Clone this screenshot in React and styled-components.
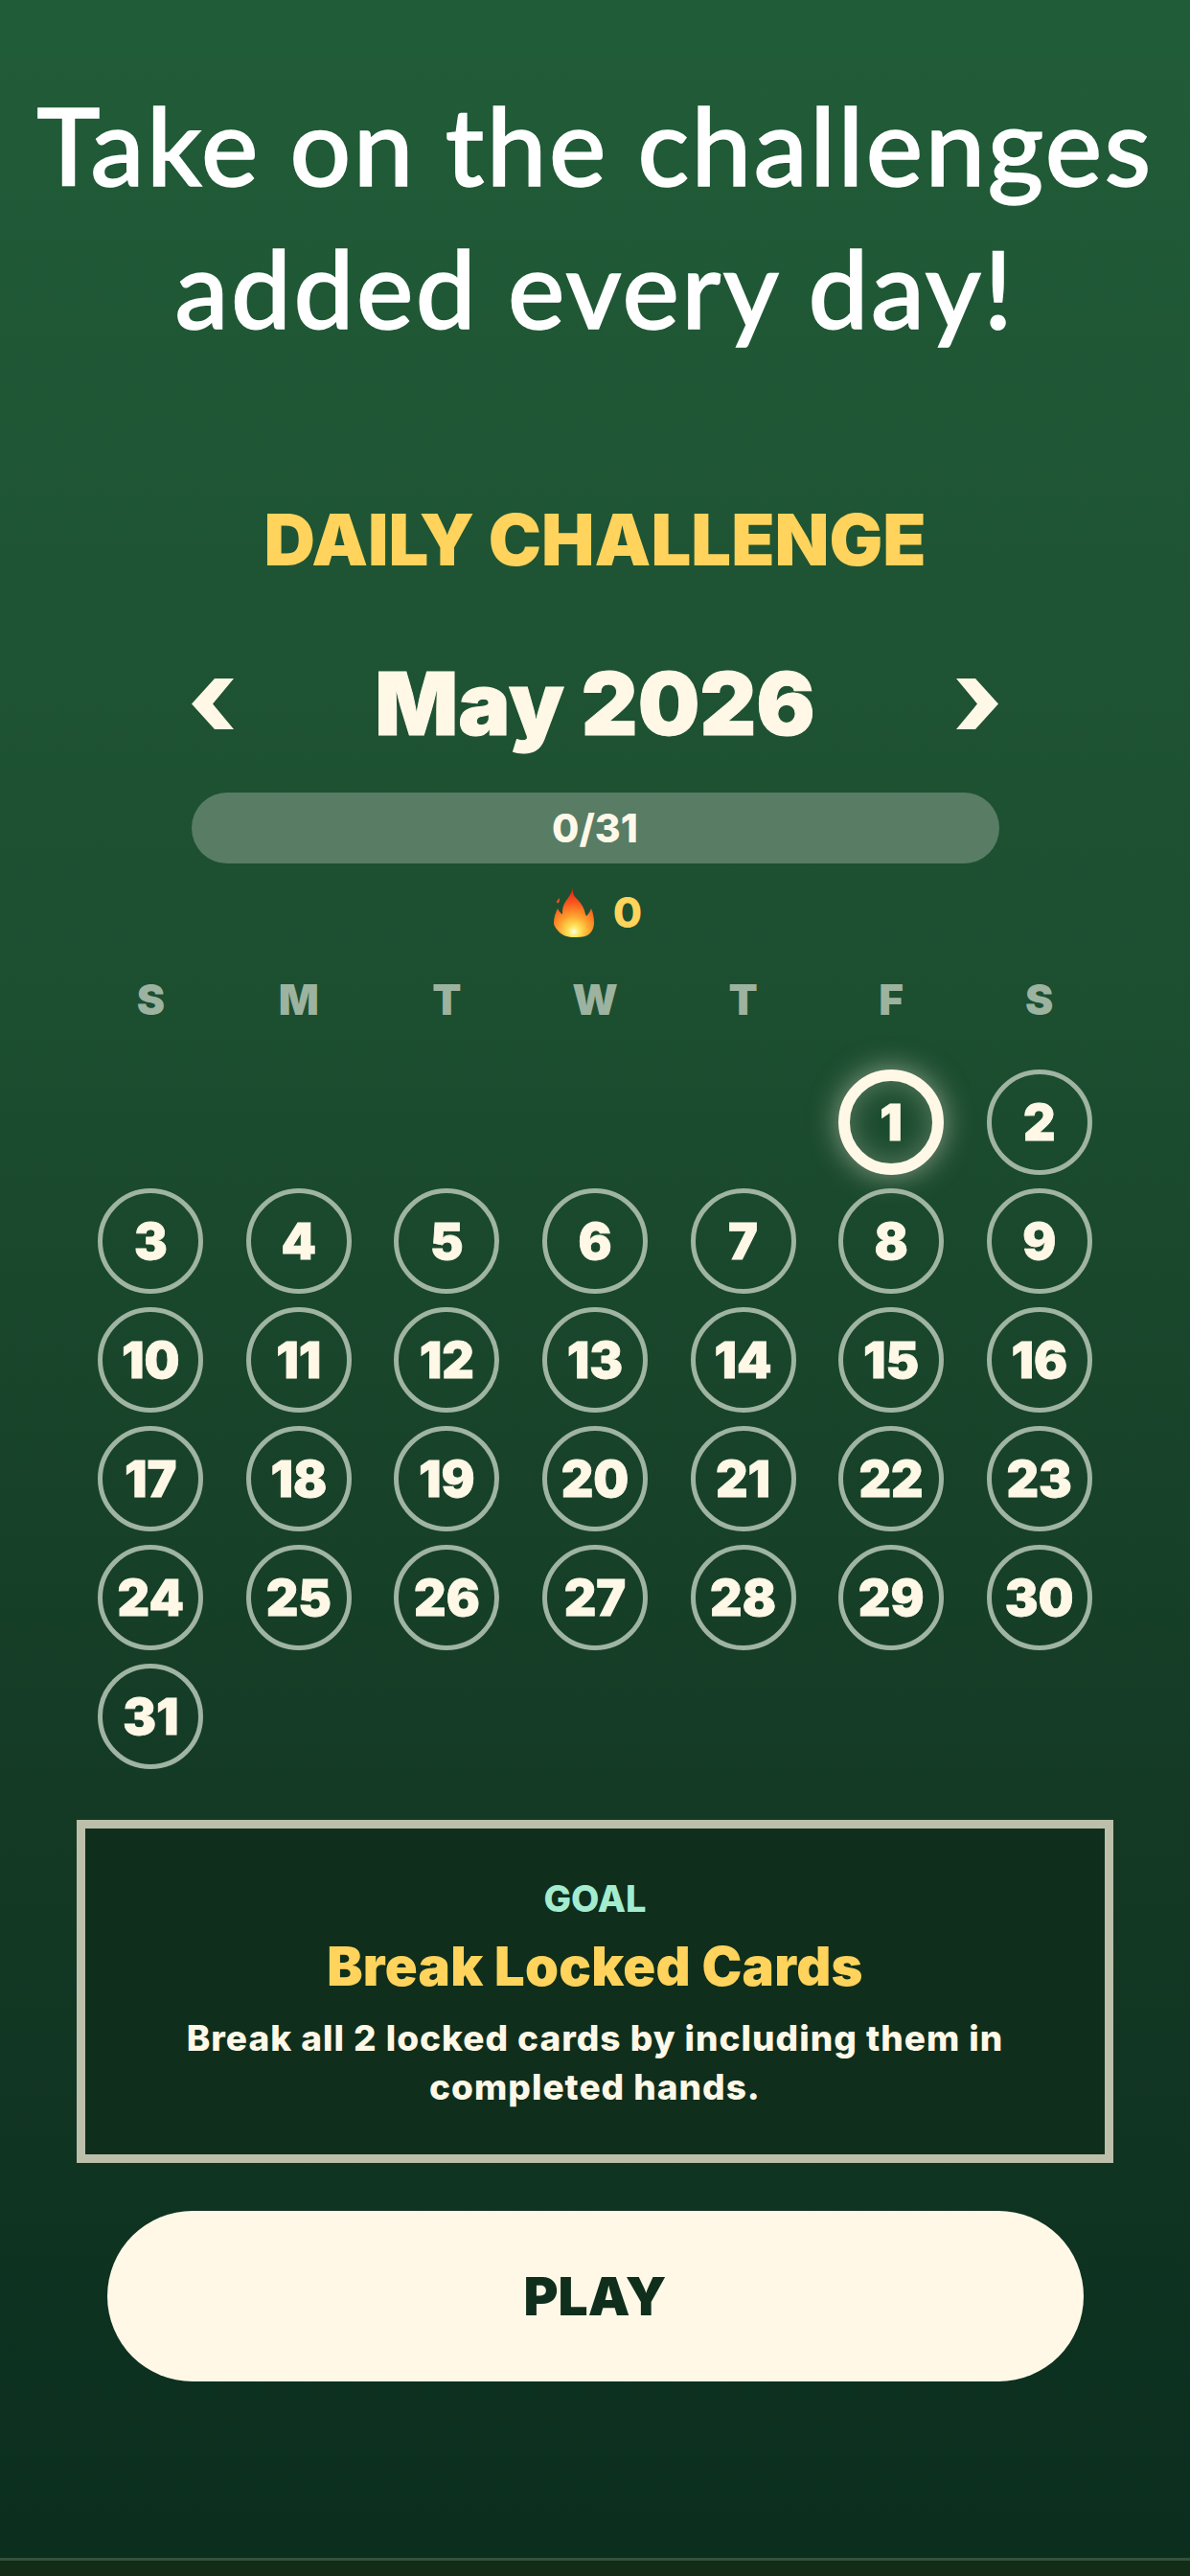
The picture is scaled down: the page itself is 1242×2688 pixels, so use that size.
import React from "react";
import styled, { createGlobalStyle } from "styled-components";

const Global = createGlobalStyle`
  html, body { margin: 0; padding: 0; background: #122c18; }
  #root { width: 1242px; height: 2688px; }
`;

const Screen = styled.main`
  width: 1242px;
  height: 2688px;
  box-sizing: border-box;
  display: flex;
  flex-direction: column;
  align-items: center;
  overflow: hidden;
  font-family: Inter, "Liberation Sans", sans-serif;
  background: #122c18;
`;

const Stage = styled.div`
  width: 100%;
  height: 2669px;
  flex: none;
  box-sizing: border-box;
  padding-top: 76px;
  display: flex;
  flex-direction: column;
  align-items: center;
  background: linear-gradient(180deg, #215c38 0%, #1c4e30 40%, #143a25 70%, #0b2e1e 100%);
`;

const HomeLine = styled.div`
  width: 100%;
  height: 3px;
  flex: none;
  background: #33523a;
`;

const Headline = styled.h1`
  margin: 0;
  width: 100%;
  text-align: center;
  font-family: Lato, "Open Sans", sans-serif;
  font-weight: 500;
  font-size: 112px;
  line-height: 149px;
  letter-spacing: 2.5px;
  -webkit-text-stroke: 1.5px #ffffff;
  color: #ffffff;
`;

const Eyebrow = styled.h2`
  margin: 146px 0 0;
  font-size: 74px;
  line-height: 86px;
  font-weight: 900;
  color: #ffd35c;
`;

const MonthRow = styled.div`
  margin-top: 73px;
  width: 843px;
  height: 110px;
  display: flex;
  align-items: center;
  justify-content: space-between;
`;

const Chevron = styled.svg`
  width: 44px;
  height: 53px;
  flex: none;
  fill: #fff8e7;
`;

const Month = styled.div`
  font-size: 91px;
  line-height: 110px;
  font-weight: 900;
  -webkit-text-stroke: 1px #fff8e7;
  color: #fff8e7;
`;

const ProgressBar = styled.div`
  margin-top: 38px;
  width: 843px;
  height: 74px;
  border-radius: 37px;
  background: #587c64;
  display: flex;
  align-items: center;
  justify-content: center;
  font-size: 41px;
  font-weight: 800;
  color: #fff8e7;
`;

const Streak = styled.div`
  margin-top: 24px;
  height: 54px;
  padding-left: 6px;
  display: flex;
  align-items: center;
  gap: 20px;
  font-size: 44px;
  font-weight: 800;
  color: #ffd35c;
`;

const Calendar = styled.div`
  margin-top: 33px;
  width: 1082px;
  display: grid;
  grid-template-columns: repeat(7, 1fr);
  justify-items: center;
`;

const Weekday = styled.div`
  height: 62px;
  margin-bottom: 35px;
  display: flex;
  align-items: center;
  font-size: 44px;
  font-weight: 900;
  color: #9cb3a0;
`;

const Cell = styled.div`
  width: 100%;
  height: 124px;
  display: flex;
  align-items: center;
  justify-content: center;
`;

const Day = styled.div`
  width: 110px;
  height: 110px;
  box-sizing: border-box;
  border-radius: 50%;
  display: flex;
  align-items: center;
  justify-content: center;
  font-size: 52px;
  font-weight: 900;
  -webkit-text-stroke: 0.8px #fff8e7;
  color: #fff8e7;
  border: ${(p) => (p.$today ? "12px solid #fff8e7" : "5.5px solid #9fb4a2")};
  box-shadow: ${(p) =>
    p.$today
      ? "0 0 30px rgba(255, 248, 231, 0.5), inset 0 0 30px rgba(255, 248, 231, 0.28)"
      : "none"};
`;

const GoalCard = styled.section`
  margin-top: 46px;
  width: 1082px;
  height: 358px;
  box-sizing: border-box;
  border: 9px solid #bcbfa9;
  background: #0f2f1c;
  display: flex;
  flex-direction: column;
  align-items: center;
  padding-top: 51px;
`;

const GoalLabel = styled.div`
  font-size: 38px;
  line-height: 44px;
  font-weight: 800;
  color: #a3ecd0;
`;

const GoalTitle = styled.div`
  margin-top: 17px;
  font-size: 56px;
  line-height: 64px;
  font-weight: 900;
  letter-spacing: 0.3px;
  color: #ffd35c;
`;

const GoalText = styled.p`
  margin: 17px 0 0;
  width: 960px;
  text-align: center;
  font-size: 37px;
  line-height: 51px;
  font-weight: 800;
  letter-spacing: 1px;
  color: #fff8e7;
`;

const PlayButton = styled.button`
  margin-top: 50px;
  width: 1019px;
  height: 178px;
  border: 0;
  border-radius: 89px;
  background: #fff8e7;
  font-family: inherit;
  font-size: 55px;
  font-weight: 900;
  color: #0f2f1c;
`;

const Flame = () => (
  <svg width="42" height="52" viewBox="0 0 42 52" aria-hidden="true">
    <defs>
      <radialGradient id="flame" gradientUnits="userSpaceOnUse" cx="21" cy="46" r="42">
        <stop offset="0" stopColor="#fffde0" />
        <stop offset="0.14" stopColor="#ffe45a" />
        <stop offset="0.38" stopColor="#ffa52e" />
        <stop offset="0.7" stopColor="#fb5a1e" />
        <stop offset="1" stopColor="#e8281a" />
      </radialGradient>
    </defs>
    <path
      fill="url(#flame)"
      d="M20 0c-1 6 1 9 5 13 4 4 7 9 8 15l1 2c2-2 4-5 5-8 2 4 3 10 3 15 0 6-3 11-7 13-4 2-10 2-14 2-6 0-12-2-15-5-3-3-6-7-6-10 0-6 2-11 4-15 1 2 3 5 5 6 0-4 0-7 2-11 3-5 8-11 9-17z"
    />
    <path fill="#f2532a" d="M3 15c0-1 2-3 3-4 0 2 0 4-1 5-1 1-2 0-2-1z" />
  </svg>
);

const days = Array.from({ length: 31 }, (_, i) => i + 1);
const labels = ["S", "M", "T", "W", "T", "F", "S"];

export default function App() {
  return (
    <Screen>
      <Global />
      <Stage>
        <Headline>
          Take on the challenges
          <br />
          added every day!
        </Headline>
        <Eyebrow>DAILY CHALLENGE</Eyebrow>
        <MonthRow>
          <Chevron viewBox="0 0 44 53" aria-hidden="true">
            <polygon points="44,0 24,0 0,26.5 24,53 44,53 22,26.5" />
          </Chevron>
          <Month>May 2026</Month>
          <Chevron viewBox="0 0 44 53" aria-hidden="true">
            <polygon points="0,0 20,0 44,26.5 20,53 0,53 22,26.5" />
          </Chevron>
        </MonthRow>
        <ProgressBar>0/31</ProgressBar>
        <Streak>
          <Flame />
          <span>0</span>
        </Streak>
        <Calendar>
          {labels.map((l, i) => (
            <Weekday key={i}>{l}</Weekday>
          ))}
          {Array.from({ length: 5 }, (_, i) => (
            <Cell key={`e${i}`} />
          ))}
          {days.map((d) => (
            <Cell key={d}>
              <Day $today={d === 1}>{d}</Day>
            </Cell>
          ))}
        </Calendar>
        <GoalCard>
          <GoalLabel>GOAL</GoalLabel>
          <GoalTitle>Break Locked Cards</GoalTitle>
          <GoalText>Break all 2 locked cards by including them in completed hands.</GoalText>
        </GoalCard>
        <PlayButton>PLAY</PlayButton>
      </Stage>
      <HomeLine />
    </Screen>
  );
}
